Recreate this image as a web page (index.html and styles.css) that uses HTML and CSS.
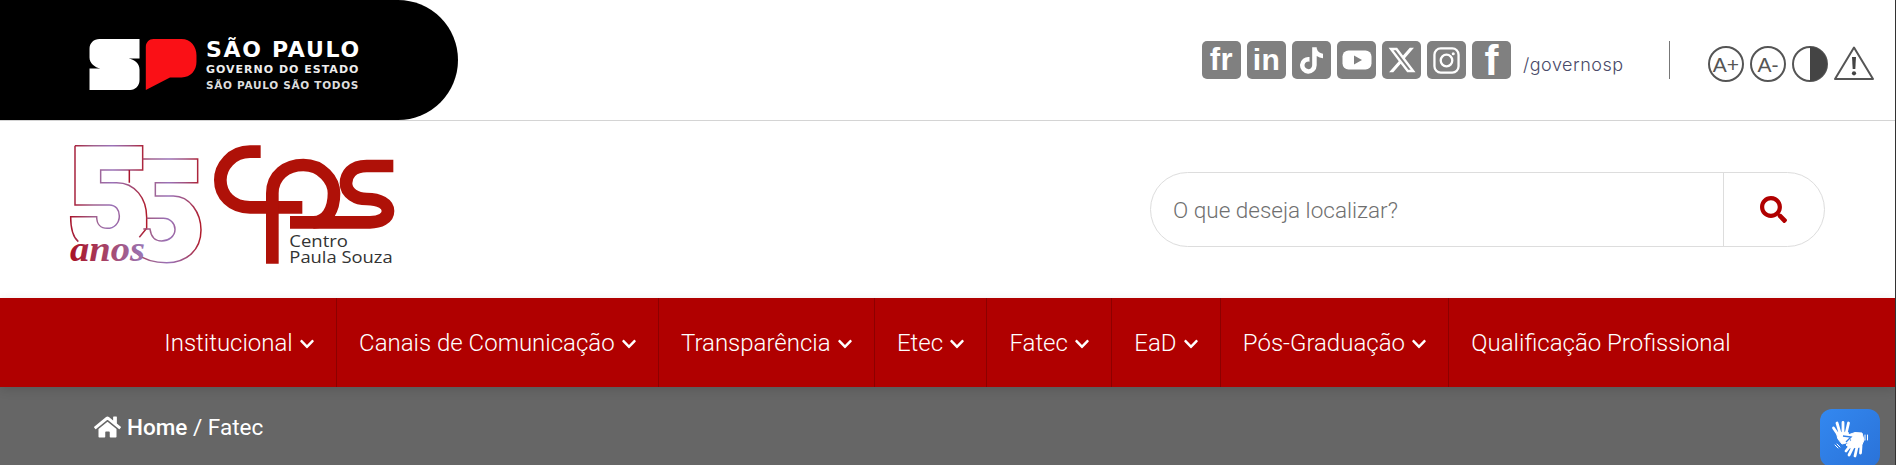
FILE: index.html
```html
<!DOCTYPE html>
<html lang="pt-BR">
<head>
<meta charset="utf-8">
<title>Fatec - Centro Paula Souza</title>
<link rel="stylesheet" href="styles.css">
</head>
<body>
<div class="page">
  <header class="topbar">
    <a class="gov-pill">
      <svg class="sp-mark" viewBox="267 116 323 154" aria-hidden="true">
        <path fill="#fff" d="M297 116H418V175H385C402 178 418 190 418 208V240C418 258 405 270 390 270H267V205H300C283 202 267 190 267 172V146C267 128 280 116 297 116Z"/>
        <path fill="#fa1016" d="M460 116H545C572 116 590 138 590 165V185C590 212 572 232 545 232H510L437 270V140C437 126 447 116 460 116Z"/>
      </svg>
      <span class="gov-text">
        <span class="gov-l1">SÃO PAULO</span>
        <span class="gov-l2">GOVERNO DO ESTADO</span>
        <span class="gov-l3">SÃO PAULO SÃO TODOS</span>
      </span>
    </a>
    <div class="top-tools">
      <ul class="socials">
        <li class="soc soc-fr">fr</li>
        <li class="soc soc-in">in</li>
        <li class="soc"><svg class="ic-tt" viewBox="0 0 448 512"><path fill="#fff" d="M448,209.91a210.06,210.06,0,0,1-122.77-39.25V349.38A162.55,162.55,0,1,1,185,188.31V278.2a74.62,74.62,0,1,0,52.23,71.18V0l88,0a121.18,121.18,0,0,0,1.86,22.17h0A122.18,122.18,0,0,0,381,102.39a121.43,121.43,0,0,0,67,20.14Z"/></svg></li>
        <li class="soc"><svg class="ic-yt" viewBox="0 0 30 20"><rect x="0.5" y="0.5" width="29" height="19" rx="6" fill="#fff"/><path d="M12 5.5L20 10L12 14.5Z" fill="#808080"/></svg></li>
        <li class="soc"><svg class="ic-x" viewBox="0 0 512 512"><path fill="#fff" d="M389.2 48h70.6L305.6 224.2 487 464H345L233.7 318.6 106.5 464H35.8L200.7 275.5 26.8 48H172.4L272.9 180.9 389.2 48zM364.4 421.8h39.1L151.1 88h-42L364.4 421.8z"/></svg></li>
        <li class="soc"><svg class="ic-ig" viewBox="0 0 28 28"><rect x="1.5" y="1.5" width="25" height="25" rx="6.5" fill="none" stroke="#fff" stroke-width="2.4"/><circle cx="14" cy="14" r="6" fill="none" stroke="#fff" stroke-width="2.4"/><circle cx="21" cy="7" r="1.6" fill="#fff"/></svg></li>
        <li class="soc soc-f">f</li>
      </ul>
      <span class="handle">/governosp</span>
      <span class="vrule"></span>
      <div class="a11y">
        <svg class="a11y-ic" viewBox="0 0 36 36"><circle cx="18" cy="18" r="17" fill="none" stroke="#555" stroke-width="2"/><text x="18" y="25.5" text-anchor="middle" class="a11y-txt">A+</text></svg>
        <svg class="a11y-ic" viewBox="0 0 36 36"><circle cx="18" cy="18" r="17" fill="none" stroke="#555" stroke-width="2"/><text x="18" y="25.5" text-anchor="middle" class="a11y-txt">A-</text></svg>
        <svg class="a11y-ic" viewBox="0 0 36 36"><circle cx="18" cy="18" r="17" fill="none" stroke="#555" stroke-width="2"/><path d="M18 1A17 17 0 0 1 18 35Z" fill="#444"/></svg>
        <svg class="a11y-tri" viewBox="0 0 40 34"><path d="M20 1.5L39 33H1Z" fill="none" stroke="#555" stroke-width="2" stroke-linejoin="round"/><path d="M18 11H22L21.3 23H18.7Z" fill="#444"/><circle cx="20" cy="27.3" r="2.1" fill="#444"/></svg>
      </div>
    </div>
  </header>

  <section class="brandbar">
    <svg class="cps-logo" viewBox="0 0 1080 450" role="img" aria-label="55 anos Centro Paula Souza">
      <defs>
        <linearGradient id="g55" x1="0" y1="0" x2="1" y2="0">
          <stop offset="0" stop-color="#a8152c"/>
          <stop offset=".3" stop-color="#a0608c"/>
          <stop offset=".55" stop-color="#9a72b8"/>
          <stop offset=".78" stop-color="#a0507e"/>
          <stop offset="1" stop-color="#b01a2a"/>
        </linearGradient>
        <linearGradient id="gan" x1="0" y1="0" x2="1" y2="0">
          <stop offset="0" stop-color="#a81226"/>
          <stop offset=".55" stop-color="#a64a72"/>
          <stop offset="1" stop-color="#9a78b8"/>
        </linearGradient>
      </defs>
      <g fill="none" stroke="url(#g55)" stroke-width="4.5">
        <path d="M75 47H278V120H152V158H200C255 158 290 205 290 262V295L268 322M85 335C70 322 62 295 62 260H140C140 282 152 295 172 295C192 295 208 280 208 258C208 240 198 225 178 225H75V47"/>
        <path d="M238 120V158M278 87H443V158H316V198H370C420 198 453 250 453 300C453 360 410 398 350 398C315 398 285 392 262 372M290 265H340C360 265 375 280 375 298C375 320 355 333 335 333C315 333 303 320 300 297H280"/>
      </g>
      <text x="60" y="392" class="anos" fill="url(#gan)" textLength="225" lengthAdjust="spacingAndGlyphs">anos</text>
      <g fill="none" stroke="#af1108" stroke-width="38">
        <path d="M632 65H600C545 65 511 110 511 150C511 195 545 232 600 232H757"/>
        <path d="M667 401V190C667 135 710 105 760 105C815 105 852 150 852 190C852 240 830 277 790 277"/>
        <path d="M1030 108H950C905 108 888 135 888 160C888 190 920 207 950 207C990 207 1014 222 1014 243C1014 265 990 277 960 277H720"/>
      </g>
      <text x="718" y="350" class="cps-name" textLength="176" lengthAdjust="spacingAndGlyphs">Centro</text>
      <text x="718" y="398" class="cps-name" textLength="310" lengthAdjust="spacingAndGlyphs">Paula Souza</text>
    </svg>
    <form class="search">
      <input class="search-input" type="text" placeholder="O que deseja localizar?">
      <button class="search-btn" type="button" aria-label="Buscar">
        <svg class="search-ic" viewBox="0 0 512 512"><path fill="#b00000" d="M505 442.7L405.3 343c-4.5-4.5-10.6-7-17-7H372c27.6-35.3 44-79.7 44-128C416 93.1 322.9 0 208 0S0 93.1 0 208s93.1 208 208 208c48.3 0 92.7-16.4 128-44v16.3c0 6.4 2.5 12.5 7 17l99.7 99.7c9.4 9.4 24.6 9.4 33.9 0l28.3-28.3c9.4-9.4 9.4-24.6.1-34zM208 336c-70.7 0-128-57.2-128-128 0-70.7 57.2-128 128-128 70.7 0 128 57.2 128 128 0 70.7-57.2 128-128 128z"/></svg>
      </button>
    </form>
  </section>

  <nav class="mainnav">
    <a class="nav-item">Institucional<svg class="chev" viewBox="0 0 448 512"><path d="M207.029 381.476L12.686 187.132c-9.373-9.373-9.373-24.569 0-33.941l22.667-22.667c9.357-9.357 24.522-9.375 33.901-.04L224 284.505l154.745-154.021c9.379-9.335 24.544-9.317 33.901.04l22.667 22.667c9.373 9.373 9.373 24.569 0 33.941L240.971 381.476c-9.373 9.372-24.569 9.372-33.942 0z"/></svg></a>
    <a class="nav-item">Canais de Comunicação<svg class="chev" viewBox="0 0 448 512"><path d="M207.029 381.476L12.686 187.132c-9.373-9.373-9.373-24.569 0-33.941l22.667-22.667c9.357-9.357 24.522-9.375 33.901-.04L224 284.505l154.745-154.021c9.379-9.335 24.544-9.317 33.901.04l22.667 22.667c9.373 9.373 9.373 24.569 0 33.941L240.971 381.476c-9.373 9.372-24.569 9.372-33.942 0z"/></svg></a>
    <a class="nav-item">Transparência<svg class="chev" viewBox="0 0 448 512"><path d="M207.029 381.476L12.686 187.132c-9.373-9.373-9.373-24.569 0-33.941l22.667-22.667c9.357-9.357 24.522-9.375 33.901-.04L224 284.505l154.745-154.021c9.379-9.335 24.544-9.317 33.901.04l22.667 22.667c9.373 9.373 9.373 24.569 0 33.941L240.971 381.476c-9.373 9.372-24.569 9.372-33.942 0z"/></svg></a>
    <a class="nav-item">Etec<svg class="chev" viewBox="0 0 448 512"><path d="M207.029 381.476L12.686 187.132c-9.373-9.373-9.373-24.569 0-33.941l22.667-22.667c9.357-9.357 24.522-9.375 33.901-.04L224 284.505l154.745-154.021c9.379-9.335 24.544-9.317 33.901.04l22.667 22.667c9.373 9.373 9.373 24.569 0 33.941L240.971 381.476c-9.373 9.372-24.569 9.372-33.942 0z"/></svg></a>
    <a class="nav-item">Fatec<svg class="chev" viewBox="0 0 448 512"><path d="M207.029 381.476L12.686 187.132c-9.373-9.373-9.373-24.569 0-33.941l22.667-22.667c9.357-9.357 24.522-9.375 33.901-.04L224 284.505l154.745-154.021c9.379-9.335 24.544-9.317 33.901.04l22.667 22.667c9.373 9.373 9.373 24.569 0 33.941L240.971 381.476c-9.373 9.372-24.569 9.372-33.942 0z"/></svg></a>
    <a class="nav-item">EaD<svg class="chev" viewBox="0 0 448 512"><path d="M207.029 381.476L12.686 187.132c-9.373-9.373-9.373-24.569 0-33.941l22.667-22.667c9.357-9.357 24.522-9.375 33.901-.04L224 284.505l154.745-154.021c9.379-9.335 24.544-9.317 33.901.04l22.667 22.667c9.373 9.373 9.373 24.569 0 33.941L240.971 381.476c-9.373 9.372-24.569 9.372-33.942 0z"/></svg></a>
    <a class="nav-item">Pós-Graduação<svg class="chev" viewBox="0 0 448 512"><path d="M207.029 381.476L12.686 187.132c-9.373-9.373-9.373-24.569 0-33.941l22.667-22.667c9.357-9.357 24.522-9.375 33.901-.04L224 284.505l154.745-154.021c9.379-9.335 24.544-9.317 33.901.04l22.667 22.667c9.373 9.373 9.373 24.569 0 33.941L240.971 381.476c-9.373 9.372-24.569 9.372-33.942 0z"/></svg></a>
    <a class="nav-item">Qualificação Profissional</a>
  </nav>

  <div class="crumbs">
    <svg class="home-ic" viewBox="0 0 576 512"><path fill="#fff" d="M280.37 148.26L96 300.11V464a16 16 0 0 0 16 16l112.06-.29a16 16 0 0 0 15.92-16V368a16 16 0 0 1 16-16h64a16 16 0 0 1 16 16v95.64a16 16 0 0 0 16 16.05L464 480a16 16 0 0 0 16-16V300L295.67 148.26a12.19 12.19 0 0 0-15.3 0zM571.6 251.47L488 182.56V44.05a12 12 0 0 0-12-12h-56a12 12 0 0 0-12 12v72.61L318.47 43a48 48 0 0 0-61 0L4.34 251.47a12 12 0 0 0-1.6 16.9l25.5 31A12 12 0 0 0 45.15 301l235.22-193.74a12.19 12.19 0 0 1 15.3 0L530.9 301a12 12 0 0 0 16.9-1.6l25.5-31a12 12 0 0 0-1.7-16.93z"/></svg>
    <strong class="crumb-home">Home</strong><span class="crumb-rest">&nbsp;/ Fatec</span>
  </div>

  <button class="vlibras" type="button" aria-label="VLibras">
    <svg viewBox="0 0 60 60" class="vlibras-ic">
      <g stroke="#fff" stroke-linecap="round" fill="none">
        <g stroke-width="2.8"><path d="M19 27L13.5 19M20 24L17 14M23 24L23 13.5M26 25L28.5 14"/></g>
        <path d="M17 24L28 23L30 33L22 35L18 30Z" fill="#fff" stroke-width="1" stroke-linejoin="round"/>
        <path d="M25 27L35 23.5L42 24L44 31L41 38L30 39L26 36L32 31Z" fill="#fff" stroke-width="1" stroke-linejoin="round"/>
        <path d="M23 27L31 28L26 33" stroke="#2f7fe8" stroke-width="1.4" stroke-linecap="butt"/>
        <g stroke-width="2.8"><path d="M30 37L26 42M33 38L29 46M37 38L35 47M41 37L40.5 44"/></g>
        <g stroke-width="1"><path d="M45 26L45 31M47.5 26L47.5 31M15 36L18 39M17 35L20 38"/></g>
      </g>
    </svg>
  </button>
</div>
</body>
</html>
```
FILE: styles.css
```css
* { box-sizing: border-box; }
html, body { margin: 0; padding: 0; height: 100%; overflow: hidden; background: #fff; }
body { font-family: Roboto, "Liberation Sans", sans-serif; }
.page { height: 465px; border-right: 1px solid #333; position: relative; overflow: hidden; display: flex; flex-direction: column; }

.topbar { height: 121px; flex: none; display: flex; align-items: flex-start; border-bottom: 1px solid #d4d4d4; }
.gov-pill { width: 458px; height: 120px; background: #000; border-radius: 0 60px 60px 0; display: flex; align-items: flex-start; padding: 39px 0 0 89px; gap: 9px; }
.sp-mark { width: 108px; height: 51px; flex: none; }
.gov-text { display: flex; flex-direction: column; color: #fff; font-family: "DejaVu Sans", sans-serif; font-weight: 700; white-space: nowrap; margin-top: -1px; }
.gov-l1 { font-size: 22px; line-height: 24px; letter-spacing: 1.7px; }
.gov-l2 { font-size: 11px; line-height: 13px; letter-spacing: 1px; margin-top: 1px; color: #eee; }
.gov-l3 { font-size: 10.5px; line-height: 13px; letter-spacing: .7px; margin-top: 3px; color: #ddd; }

.top-tools { margin-left: auto; padding: 41px 21px 0 0; display: flex; align-items: flex-start; }
.socials { list-style: none; margin: 0; padding: 0; display: flex; gap: 6px; }
.soc { width: 39px; height: 38px; border-radius: 5px; background: #808080; color: #fff; display: flex; align-items: center; justify-content: center; font-family: "Liberation Sans", sans-serif; font-weight: 700; }
.soc-fr { font-size: 31px; letter-spacing: .5px; line-height: 38px; }
.soc-in { font-size: 30px; letter-spacing: .5px; line-height: 38px; }
.soc-f { font-size: 42px; line-height: 36px; padding-top: 2px; }
.ic-tt { width: 23px; height: 27px; }
.ic-yt { width: 30px; height: 20px; }
.ic-x { width: 30px; height: 30px; }
.ic-ig { width: 27px; height: 27px; }
.handle { margin-left: 12px; width: 100px; line-height: 48px; font-family: Inter, sans-serif; font-weight: 300; font-size: 18px; letter-spacing: .5px; color: #4a4a68; white-space: nowrap; }
.vrule { width: 1px; height: 38px; background: #777; margin-left: 46px; }
.a11y { margin-left: 38px; padding-top: 5px; display: flex; gap: 6px; }
.a11y-ic { width: 36px; height: 36px; }
.a11y-tri { width: 40px; height: 34px; }
.a11y-txt { font-family: "Liberation Sans", sans-serif; font-size: 21px; fill: #555; }

.brandbar { height: 177px; flex: none; display: flex; align-items: flex-start; padding-left: 50px; }
.cps-logo { width: 360px; height: 150px; margin-top: 9px; flex: none; }
.anos { font-family: "Liberation Serif", serif; font-style: italic; font-weight: 700; font-size: 105px; }
.cps-name { font-family: "Open Sans", sans-serif; font-size: 48px; fill: #333; }
.search { margin: 51px 70px 0 auto; width: 675px; height: 75px; border: 1px solid #ddd; border-radius: 38px; display: flex; overflow: hidden; background: #fff; }
.search-input { flex: 1; min-width: 0; border: 0; outline: 0; background: transparent; padding: 0 0 0 22px; font: 300 22.5px Roboto, sans-serif; color: #666; }
.search-input::placeholder { color: #6f6f6f; opacity: 1; }
.search-btn { width: 101px; flex: none; border: 0; border-left: 1px solid #ddd; background: transparent; padding: 0; display: flex; align-items: center; justify-content: center; }
.search-ic { width: 27px; height: 27px; margin-right: 2px; }

.mainnav { height: 89px; flex: none; background: #b00000; display: flex; justify-content: center; position: relative; z-index: 2; box-shadow: 0 3px 10px rgba(0,0,0,.12); }
.nav-item { display: flex; align-items: center; padding: 0 22px; color: #fff; font-weight: 300; font-size: 24px; white-space: nowrap; border-right: 1px solid #8c0000; }
.nav-item:last-child { border-right: 0; }
.chev { width: 14px; height: 16px; fill: #fff; margin: 3px 0 0 7.35px; }

.crumbs { flex: 1; background: #666; display: flex; align-items: center; padding: 1px 0 0 94px; color: #fff; font-size: 22.5px; }
.home-ic { width: 27px; height: 24px; margin-right: 6px; }
.crumb-home { font-weight: 500; }
.crumb-rest { font-weight: 400; }

.vlibras { position: absolute; left: 1820px; top: 409px; width: 60px; height: 58px; border: 0; padding: 0; border-radius: 12px; background: linear-gradient(135deg, #3388f0, #2a72d8); z-index: 3; }
.vlibras-ic { width: 60px; height: 60px; display: block; }
```
